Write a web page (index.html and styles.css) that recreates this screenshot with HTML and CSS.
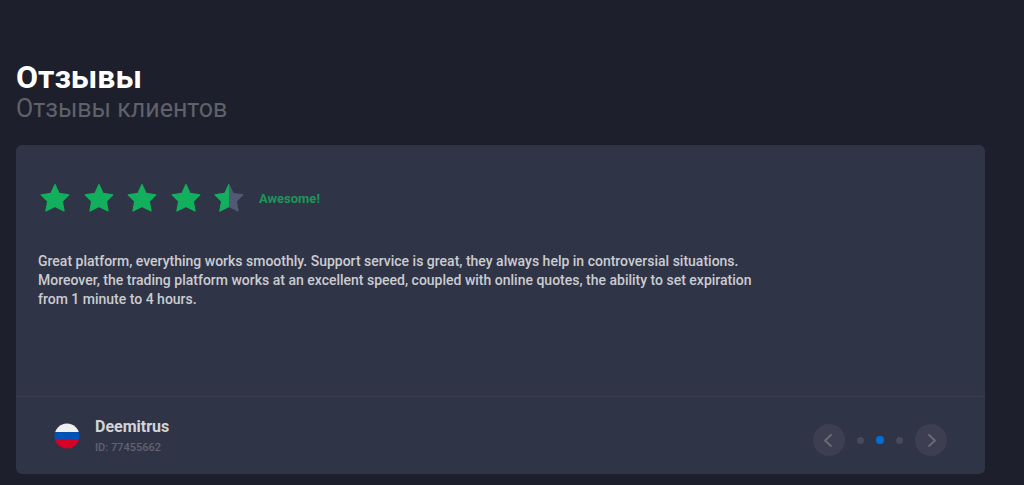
FILE: index.html
```html
<!DOCTYPE html>
<html lang="ru">
<head>
    <meta charset="UTF-8">
    <meta name="viewport" content="width=device-width, initial-scale=1.0">
    <title>Отзывы</title>
    <link rel="stylesheet" href="styles.css">
</head>
<body>
<!-- Shared icon shapes -->
<svg class="sprite" aria-hidden="true">
    <symbol id="star" viewBox="0 0 30 30">
        <path d="M15 1.500L19.100 10.400L28.800 11.900L22.300 18.300L24.100 28L15 23.400L5.900 28L7.700 18.300L1.200 11.900L10.900 10.400Z" stroke-width="1.200" stroke-linejoin="round"/>
    </symbol>
</svg>

<section class="reviews">
    <h1 class="reviews-title">Отзывы</h1>
    <h2 class="reviews-subtitle">Отзывы клиентов</h2>

    <article class="review-card">
        <div class="review-body">
            <div class="rating">
                <div class="stars">
                    <svg class="star"><use href="#star"/></svg>
                    <svg class="star"><use href="#star"/></svg>
                    <svg class="star"><use href="#star"/></svg>
                    <svg class="star"><use href="#star"/></svg>
                    <svg class="star" viewBox="0 0 30 30">
                        <clipPath id="left-half"><rect width="15" height="30"/></clipPath>
                        <use class="star-empty" href="#star" width="30" height="30"/>
                        <use href="#star" width="30" height="30" clip-path="url(#left-half)"/>
                    </svg>
                </div>
                <span class="rating-label">Awesome!</span>
            </div>
            <p class="review-text">Great platform, everything works smoothly. Support service is great, they always help in controversial situations. Moreover, the trading platform works at an excellent speed, coupled with online quotes, the ability to set expiration from 1 minute to 4 hours.</p>
        </div>

        <footer class="review-footer">
            <div class="author">
                <svg class="flag" viewBox="0 0 26 26">
                    <clipPath id="round"><circle cx="13" cy="13" r="12.500"/></clipPath>
                    <g clip-path="url(#round)">
                        <rect width="26" height="9" fill="#f0f0f0"/>
                        <rect y="9" width="26" height="8" fill="#0052b4"/>
                        <rect y="17" width="26" height="9" fill="#d80027"/>
                    </g>
                </svg>
                <div class="author-info">
                    <div class="author-name">Deemitrus</div>
                    <div class="author-id">ID: 77455662</div>
                </div>
            </div>
            <nav class="slider-nav">
                <button class="arrow" type="button" aria-label="Previous">
                    <svg viewBox="0 0 32 32"><path d="M18 11l-6 5.500 6 5.500"/></svg>
                </button>
                <div class="dots">
                    <button class="dot" type="button" aria-label="1"></button>
                    <button class="dot dot-active" type="button" aria-label="2"></button>
                    <button class="dot" type="button" aria-label="3"></button>
                </div>
                <button class="arrow" type="button" aria-label="Next">
                    <svg viewBox="0 0 32 32"><path d="M14 11l6 5.500-6 5.500"/></svg>
                </button>
            </nav>
        </footer>
    </article>
</section>
</body>
</html>
```

FILE: styles.css
```css
body {
    font-family: Roboto, Arial, sans-serif;
    background-color: #1d1f2d;
    color: #d3d4d8;
    margin: 0;
}

.sprite {
    display: none;
}

.reviews {
    padding: 58px 39px 11px 16px;
}

.reviews-title {
    margin: 0;
    font-size: 32px;
    line-height: 38px;
    font-weight: 700;
    color: #fff;
}

.reviews-subtitle {
    margin: 0 0 24px;
    font-size: 25px;
    line-height: 25px;
    font-weight: 400;
    color: #606269;
}

.review-card {
    background-color: #303447;
    border-radius: 6px;
}

.review-body {
    box-sizing: border-box;
    min-height: 251px;
    padding: 38px 22px;
}

.rating {
    display: flex;
    align-items: center;
    gap: 15px;
}

.stars {
    display: flex;
    justify-content: space-between;
    width: 204px;
    margin-left: 2px;
}

.star {
    width: 30px;
    height: 30px;
    fill: #12b05c;
    stroke: #12b05c;
}

.star-empty {
    fill: #515974;
    stroke: #515974;
}

.rating-label {
    font-size: 13px;
    font-weight: 700;
    color: #1b9759;
}

.review-text {
    max-width: 730px;
    margin: 39px 0 0;
    font-size: 14px;
    line-height: 19px;
    font-weight: 500;
    color: #cbccd1;
}

.review-footer {
    display: flex;
    justify-content: space-between;
    align-items: flex-start;
    border-top: 1px solid #3a3b4c;
    padding: 20px 38px 18px;
}

.author {
    display: flex;
    align-items: center;
    gap: 15px;
}

.flag {
    width: 26px;
    height: 26px;
}

.author-name {
    font-size: 16px;
    line-height: 20px;
    font-weight: 700;
}

.author-id {
    margin-top: 4px;
    font-size: 11px;
    line-height: 14px;
    font-weight: 500;
    color: #61646f;
}

.slider-nav {
    display: flex;
    align-items: center;
    gap: 12px;
    margin-top: 7px;
}

.arrow {
    width: 32px;
    height: 32px;
    padding: 0;
    border: none;
    border-radius: 50%;
    background-color: #3d3e4f;
    cursor: pointer;
}

.arrow svg {
    display: block;
    fill: none;
    stroke: #696a76;
    stroke-width: 2;
    stroke-linecap: round;
    stroke-linejoin: round;
}

.dots {
    display: flex;
    align-items: center;
    gap: 12px;
}

.dot {
    width: 7px;
    height: 7px;
    padding: 0;
    border: none;
    border-radius: 50%;
    background-color: #484959;
    cursor: pointer;
}

.dot-active {
    width: 8px;
    height: 8px;
    background-color: #0070d9;
}
```
